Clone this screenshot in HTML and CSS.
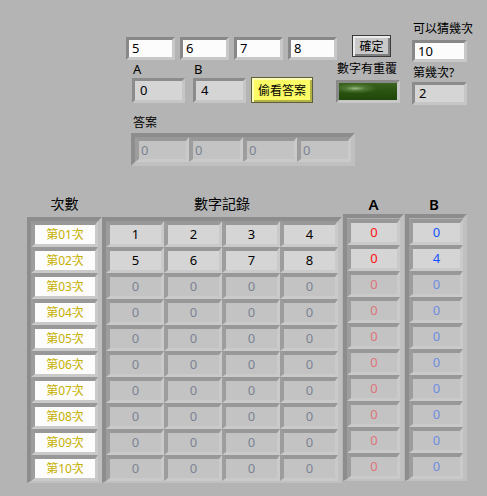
FILE: index.html
```html
<!DOCTYPE html>
<html>
<head>
<meta charset="utf-8">
<link rel="stylesheet" href="styles.css">
</head>
<body>
<div class="panel">
  <div class="top">
    <div class="col1">
      <div class="inputs">
        <div class="ctl">5</div>
        <div class="ctl">6</div>
        <div class="ctl">7</div>
        <div class="ctl">8</div>
      </div>
      <div class="abrow">
        <div class="field"><div class="lbl">A</div><div class="ind">0</div></div>
        <div class="field"><div class="lbl">B</div><div class="ind">4</div></div>
        <button class="peek">偷看答案</button>
      </div>
    </div>
    <div class="col2">
      <button class="confirm">確定</button>
      <div class="lbl dup">數字有重覆</div>
      <div class="led"></div>
    </div>
    <div class="col3">
      <div class="lbl">可以猜幾次</div>
      <div class="ctl num">10</div>
      <div class="lbl gap">第幾次?</div>
      <div class="ind num2">2</div>
    </div>
  </div>

  <div class="answer">
    <div class="lbl">答案</div>
    <div class="frame arr">
      <div class="cell ans off">0</div>
      <div class="cell ans off">0</div>
      <div class="cell ans off">0</div>
      <div class="cell ans off">0</div>
    </div>
  </div>

  <div class="table">
    <div class="tcol c-lab">
      <div class="th">次數</div>
      <div class="frame" id="labs"></div>
    </div>
    <div class="tcol c-mid">
      <div class="th">數字記錄</div>
      <div class="frame" id="mid"></div>
    </div>
    <div class="tcol c-a">
      <div class="th ab">A</div>
      <div class="frame" id="acol"></div>
    </div>
    <div class="tcol c-b">
      <div class="th ab bh">B</div>
      <div class="frame" id="bcol"></div>
    </div>
  </div>
</div>
<script src="app.js"></script>
</body>
</html>
```
FILE: app.js
```js
var data = [[1,2,3,4,0,0],[5,6,7,8,0,4]];
var labs = document.getElementById('labs');
var mid = document.getElementById('mid');
var acol = document.getElementById('acol');
var bcol = document.getElementById('bcol');
for (var i = 0; i < 10; i++) {
  var on = i < data.length;
  var d = on ? data[i] : [0,0,0,0,0,0];
  var n = (i + 1 < 10 ? '0' : '') + (i + 1);
  var l = document.createElement('div');
  l.className = 'cell lab';
  l.textContent = '第' + n + '次';
  labs.appendChild(l);
  var r = document.createElement('div');
  r.className = 'row';
  for (var j = 0; j < 4; j++) {
    var c = document.createElement('div');
    c.className = 'cell digit' + (on ? '' : ' off');
    c.textContent = d[j];
    r.appendChild(c);
  }
  mid.appendChild(r);
  var a = document.createElement('div');
  a.className = 'cell acell' + (on ? '' : ' off');
  a.textContent = d[4];
  acol.appendChild(a);
  var b = document.createElement('div');
  b.className = 'cell bcell' + (on ? '' : ' off');
  b.textContent = d[5];
  bcol.appendChild(b);
}
```
FILE: styles.css
```css
* { box-sizing: border-box; }
body {
  margin: 0;
  background: #b4b4b4;
  font-family: "Noto Sans", "Noto Sans CJK TC", sans-serif;
  font-size: 12px;
  color: #000;
}
.panel { width: 487px; height: 496px; overflow: hidden; }

.top { display: flex; align-items: flex-start; padding: 22px 0 0 126px; }
.col1 { width: 211px; margin-top: 15px; }
.inputs { display: flex; gap: 5px; }
.ctl {
  width: 49px; height: 23px;
  background: #fcfcfc;
  border: 3px solid;
  border-color: #888 #c8c8c8 #c8c8c8 #888;
  padding-left: 3px;
  font-size: 13px;
  line-height: 17px;
}
.ind {
  width: 53px; height: 25px;
  background: #d5d5d5;
  border: 3px solid;
  border-color: #8c8c8c #c6c6c6 #c6c6c6 #8c8c8c;
  padding-left: 5px;
  font-size: 13px;
  line-height: 19px;
}
.lbl { height: 14px; line-height: 14px; white-space: nowrap; font-size: 12px; }
.abrow { display: flex; align-items: flex-end; margin-top: 2px; padding-left: 6px; }
.field { display: flex; flex-direction: column; }
.field .lbl { padding-left: 1px; margin-bottom: 2px; font-size: 13px; }
.field + .field { margin-left: 8px; }
.peek {
  margin-left: 5px; width: 62px; height: 26px; padding: 0;
  font: inherit; font-size: 12px; color: #000;
  background: #fbfb66;
  border: 1px solid #5e5e3a;
  box-shadow: inset 2px 2px 0 #ffffb4, inset -2px -2px 0 #b3b345;
}

.col2 { width: 64px; margin: 13px 0 0 -1px; display: flex; flex-direction: column; }
.confirm {
  margin-left: 16px; width: 39px; height: 22px; padding: 0;
  font: inherit; font-size: 12px; color: #000;
  background: #c9c9c9;
  border: 1px solid #3a3a3a;
  box-shadow: inset 2px 2px 0 #ececec, inset -2px -2px 0 #7e7e7e;
}
.dup { margin-top: 5px; padding-left: 1px; }
.led {
  margin-top: 4px; width: 64px; height: 23px;
  border: 3px solid;
  border-color: #8a8a8a #c8c8c8 #c8c8c8 #8a8a8a;
  background:
    radial-gradient(ellipse 38% 30% at 28% 32%, rgba(170,200,150,0.85) 0%, rgba(110,150,80,0.5) 45%, rgba(60,100,30,0) 100%),
    linear-gradient(180deg, #3b6420 0%, #2b5412 45%, #1f4608 100%);
}

.col3 { margin-left: 12px; width: 60px; display: flex; flex-direction: column; }
.col3 .lbl { padding-left: 1px; }
.num { width: 55px; height: 22px; margin-top: 4px; line-height: 16px; }
.gap { margin-top: 4px; }
.num2 { width: 55px; height: 23px; margin-top: 2px; line-height: 17px; padding-left: 4px; }

.answer { margin: 11px 0 0 131px; }
.answer .lbl { padding-left: 2px; margin-bottom: 3px; }
.arr { display: flex; width: 224px; }

.frame {
  border: 4px solid;
  border-color: #8d8d8d #c0c0c0 #c0c0c0 #8d8d8d;
  background: #b0b0b0;
}
.cell {
  height: 26px;
  border-style: solid;
  border-width: 4px 3px 3px 4px;
  border-color: #989898 #cacaca #cacaca #9d9d9d;
  background: #d5d5d5;
  text-align: center;
  font-size: 13px;
  line-height: 19px;
  color: #000;
}
.cell.off { background: #c3c3c3; color: #7b8393; }
.ans { width: 54px; height: 25px; line-height: 18px; text-align: left; padding-left: 2px; }

.table { display: flex; align-items: flex-start; margin-top: 30px; padding-left: 27px; }
.tcol { display: flex; flex-direction: column; }
.th { height: 16px; line-height: 16px; text-align: center; font-size: 14px; }
.ab { font-size: 15px; font-weight: 600; }
.bh { padding-right: 4px; }
.c-lab { width: 75px; }
.c-mid { width: 240px; }
.c-a { width: 61px; margin-left: 1px; }
.c-b { width: 62px; margin-left: 1px; }
.c-lab .frame, .c-mid .frame { margin-top: 5px; border-bottom-width: 2px; }
.c-a .frame, .c-b .frame { margin-top: 2px; padding-top: 1px; border-bottom-width: 2px; }
.row { display: flex; }
.lab { width: 67px; background: #fcfcfc; color: #c6b000; font-size: 12px; }
.digit { width: 58px; }
.acell { width: 53px; color: #ff1010; }
.bcell { width: 54px; color: #1452ff; }
.acell.off { color: #df7379; }
.bcell.off { color: #6e8ee0; }
```
